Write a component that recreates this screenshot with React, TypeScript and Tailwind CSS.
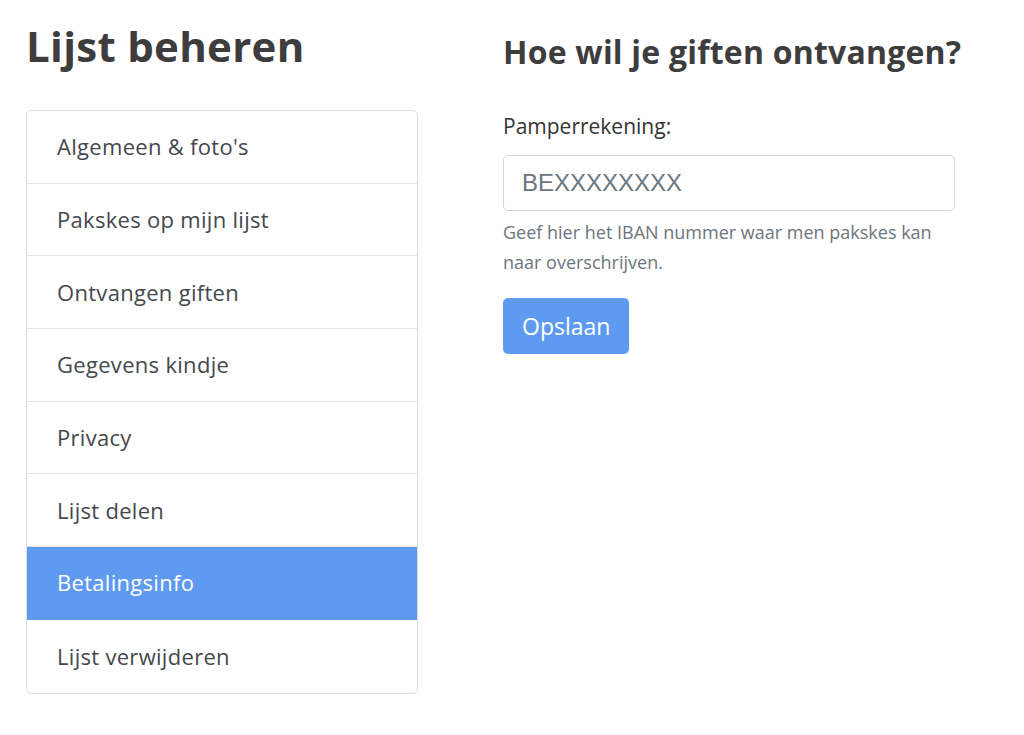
import React from 'react'

const menuItems = [
    'Algemeen & foto\'s',
    'Pakskes op mijn lijst',
    'Ontvangen giften',
    'Gegevens kindje',
    'Privacy',
    'Lijst delen',
    'Betalingsinfo',
    'Lijst verwijderen',
]

export default function App() {
    const active = 'Betalingsinfo'

    return (
        <div className="min-h-[735px] bg-white font-['Open_Sans',sans-serif] text-[#3d3d3d]">
            <div className="flex gap-[85px] px-[26px] pt-[20px]">
                <div className="w-[392px] shrink-0">
                    <h1 className="text-[42px] font-bold leading-[52px] tracking-[0.3px]">Lijst beheren</h1>
                    <ul className="mt-[38px] overflow-hidden rounded-[5px] border border-[#dedede]">
                        {menuItems.map((item) => (
                            <li
                                key={item}
                                className={
                                    item === active
                                        ? 'flex h-[72.7px] items-center border-b border-[#5e9bf0] bg-[#5e9bf0] pl-[30px] text-[22px] tracking-[0.3px] text-white'
                                        : 'flex h-[72.7px] items-center border-b border-[#e3e3e3] pl-[30px] text-[22px] tracking-[0.3px] text-[#45484d] last:border-b-0'
                                }
                            >
                                {item}
                            </li>
                        ))}
                    </ul>
                </div>

                <div className="w-[452px] shrink-0 pt-[12px]">
                    <h2 className="whitespace-nowrap text-[32px] font-bold leading-[40px] tracking-[0.2px]">Hoe wil je giften ontvangen?</h2>
                    <form className="mt-[41px]">
                        <label htmlFor="iban" className="block text-[21px] leading-[26px] text-[#333]">
                            Pamperrekening:
                        </label>
                        <input
                            id="iban"
                            type="text"
                            placeholder="BEXXXXXXXX"
                            className="mt-[16px] block h-[56px] w-full rounded-[5px] border border-[#d4d4d4] px-[18px] font-['Liberation_Sans',sans-serif] text-[24px] text-[#555] placeholder:text-[#6c757d] focus:outline-none"
                        />
                        <p className="mt-[6px] text-[18px] leading-[30px] text-[#6c757d]">
                            Geef hier het IBAN nummer waar men pakskes kan naar overschrijven.
                        </p>
                        <button
                            type="submit"
                            className="mt-[21px] h-[56px] rounded-[5px] bg-[#5e9bf0] px-[19px] text-[23px] text-white"
                        >
                            Opslaan
                        </button>
                    </form>
                </div>
            </div>
        </div>
    )
}
